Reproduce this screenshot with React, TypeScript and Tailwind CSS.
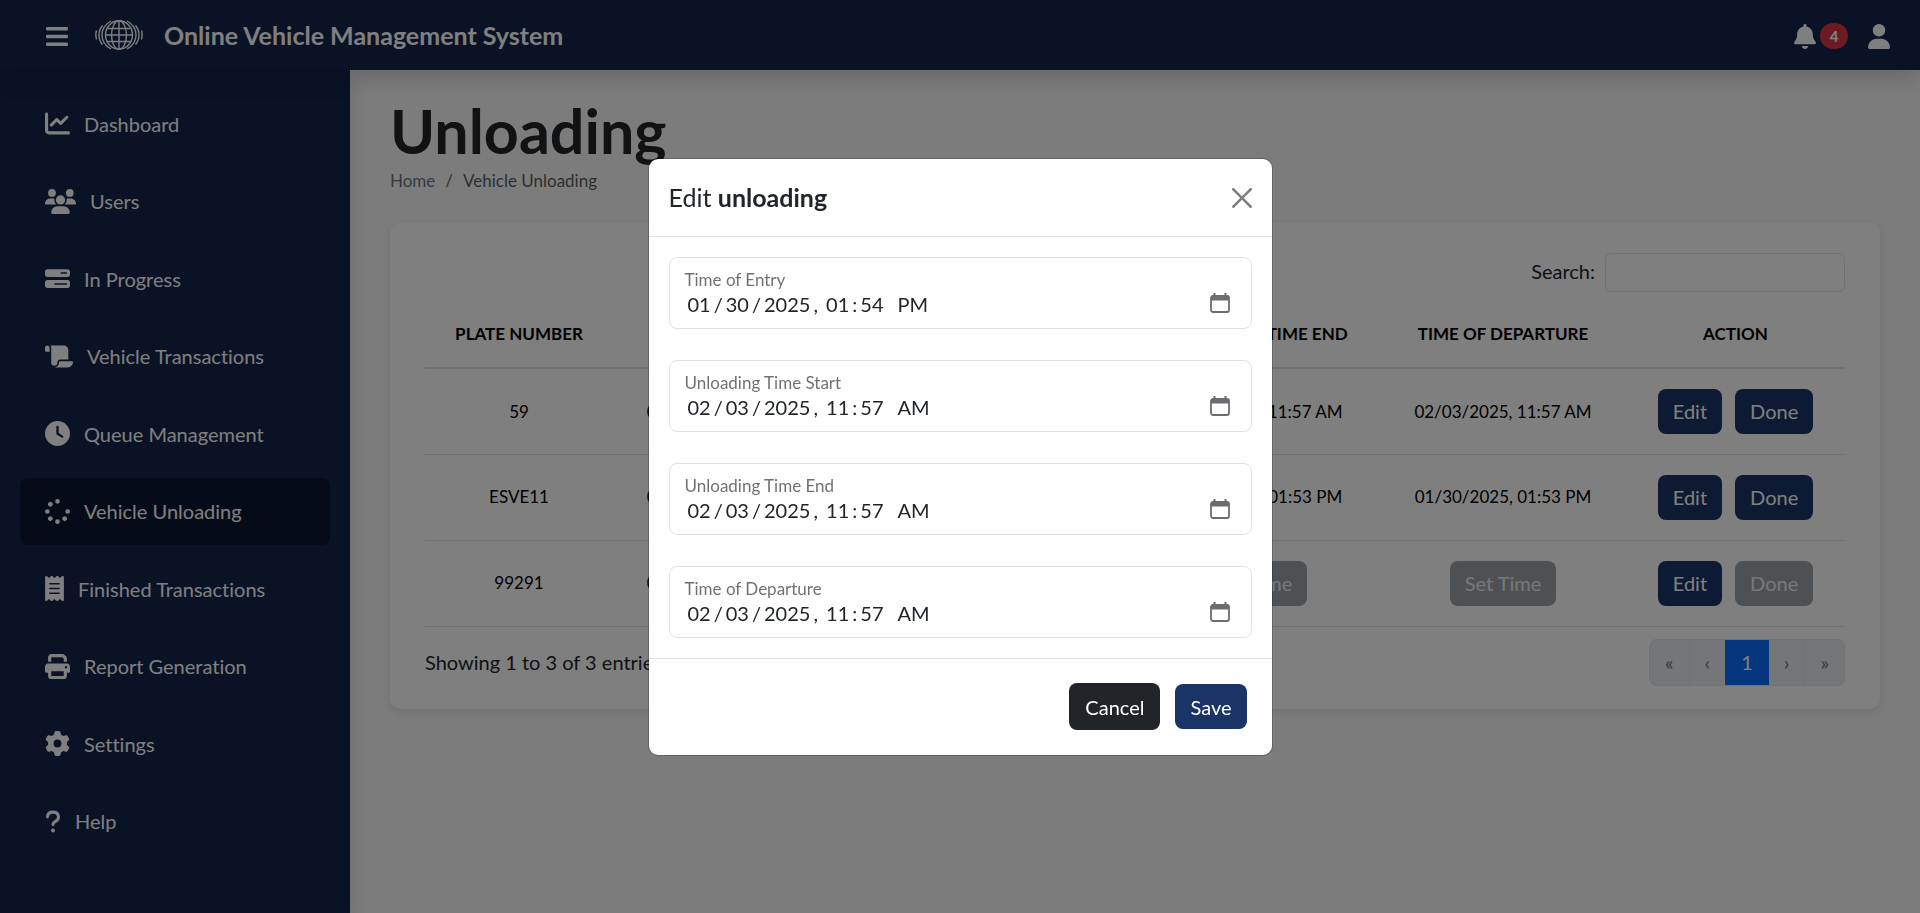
import type { ReactNode } from "react";
import { FaBars } from "react-icons/fa";
import {
  FaBarsProgress,
  FaBell,
  FaChartLine,
  FaClock,
  FaGear,
  FaPrint,
  FaQuestion,
  FaReceipt,
  FaScroll,
  FaSpinner,
  FaUser,
  FaUsers,
} from "react-icons/fa6";

const navItems = [
  { label: "Dashboard", icon: FaChartLine, width: "w-[25px]" },
  { label: "Users", icon: FaUsers, width: "w-[31px]" },
  { label: "In Progress", icon: FaBarsProgress, width: "w-[25px]" },
  { label: "Vehicle Transactions", icon: FaScroll, width: "w-[28px]" },
  { label: "Queue Management", icon: FaClock, width: "w-[25px]" },
  { label: "Vehicle Unloading", icon: FaSpinner, width: "w-[25px]", active: true },
  { label: "Finished Transactions", icon: FaReceipt, width: "w-[19px]" },
  { label: "Report Generation", icon: FaPrint, width: "w-[25px]" },
  { label: "Settings", icon: FaGear, width: "w-[25px]" },
  { label: "Help", icon: FaQuestion, width: "w-[16px]" },
];

type Row = { plate: string; entry: string; start?: string; end?: string; departure?: string };

const rows: Row[] = [
  {
    plate: "59",
    entry: "01/30/2025, 01:54 PM",
    start: "02/03/2025, 11:57 AM",
    end: "02/03/2025, 11:57 AM",
    departure: "02/03/2025, 11:57 AM",
  },
  {
    plate: "ESVE11",
    entry: "01/30/2025, 01:52 PM",
    start: "01/30/2025, 01:53 PM",
    end: "01/30/2025, 01:53 PM",
    departure: "01/30/2025, 01:53 PM",
  },
  { plate: "99291", entry: "01/30/2025, 01:55 PM" },
];

const fields = [
  { id: "entry", label: "Time of Entry", value: "2025-01-30T13:54" },
  { id: "start", label: "Unloading Time Start", value: "2025-02-03T11:57" },
  { id: "end", label: "Unloading Time End", value: "2025-02-03T11:57" },
  { id: "departure", label: "Time of Departure", value: "2025-02-03T11:57" },
];

function Globe() {
  return (
    <svg viewBox="0 0 48 32" className="h-8 w-12" fill="none" stroke="currentColor" strokeWidth="1.4" aria-hidden="true">
      <ellipse cx="24" cy="15" rx="13.5" ry="14.2" />
      <ellipse cx="24" cy="15" rx="7.5" ry="14.2" />
      <path d="M24 1v28M10.500 15h27M12.500 8.500h23M12.500 21.500h23" />
      <path d="M16 1Q7 6 7 15T16 29M32 1Q41 6 41 15T32 29" />
      <path d="M7.500 5.500Q4 9.500 4 15T7.500 24.500M40.500 5.500Q44 9.500 44 15T40.500 24.500" />
      <path d="M1.500 10.500Q.2 15 1.500 19.500M46.500 10.500Q47.800 15 46.500 19.500" />
    </svg>
  );
}

function CalendarIcon() {
  return (
    <svg viewBox="0 0 20 20" className="mt-[2px] mr-[6px] size-5 shrink-0 text-[#6b6d70]" fill="none" aria-hidden="true">
      <rect x="1" y="3" width="18" height="16" rx="2" stroke="currentColor" strokeWidth="1.8" />
      <path d="M1 4.500Q1 2.500 3 2.500h14q2 0 2 2v3H1zM3.500 0h2v3h-2zM14.500 0h2v3h-2z" fill="currentColor" />
    </svg>
  );
}

function ActionButton({ children, disabled = false }: { children: ReactNode; disabled?: boolean }) {
  return (
    <button
      type="button"
      disabled={disabled}
      className="h-[45px] rounded-lg bg-[#1b3467] px-[15px] text-xl text-white disabled:bg-[#9ba3a7] disabled:text-[#f0f0f0]"
    >
      {children}
    </button>
  );
}

function TimeCell({ value }: { value?: string }) {
  return <td>{value ?? <ActionButton disabled>Set Time</ActionButton>}</td>;
}

function Header() {
  return (
    <header className="relative z-20 flex h-[70px] items-center bg-[#14254b] pt-[2px] pr-[30px] pl-[46px] text-white shadow-[0_10px_20px_rgba(0,0,0,0.15)]">
      <button type="button" aria-label="Toggle menu">
        <FaBars className="h-[25px] w-[22px]" />
      </button>
      <a href="#" className="ml-[27px] flex items-center gap-[21px]">
        <Globe />
        <span className="text-[25px] font-bold">Online Vehicle Management System</span>
      </a>
      <div className="ml-auto flex items-center gap-5">
        <button type="button" aria-label="Notifications" className="flex items-center gap-1">
          <FaBell className="h-[25px] w-[22px]" />
          <span className="flex h-[26px] w-7 items-center justify-center rounded-full bg-[#dc3545] text-[15px] font-bold">
            4
          </span>
        </button>
        <button type="button" aria-label="Account">
          <FaUser className="h-[25px] w-[22px]" />
        </button>
      </div>
    </header>
  );
}

function Sidebar() {
  return (
    <nav className="relative z-10 flex w-[350px] shrink-0 flex-col justify-between bg-[#14254b] px-5 pt-5 pb-[58px] text-white shadow-[0_10px_20px_rgba(0,0,0,0.15)]">
      {navItems.map(({ label, icon: Icon, width, active }) => (
        <a
          key={label}
          href="#"
          className={`flex h-[67px] items-center gap-[14px] rounded-lg px-[25px] text-xl ${active ? "bg-[#0a1830]" : ""}`}
        >
          <Icon className={`h-[25px] ${width}`} />
          {label}
        </a>
      ))}
    </nav>
  );
}

function UnloadingTable() {
  return (
    <table className="mt-[6px] w-full table-fixed text-center text-[17px] text-black">
      <colgroup>
        <col className="w-[188px]" />
        <col className="w-[244px]" />
        <col className="w-[271px]" />
        <col className="w-[252px]" />
        <col className="w-[246px]" />
        <col className="w-[219px]" />
      </colgroup>
      <thead>
        <tr className="h-[70px] border-b-2 border-[#dee2e6] uppercase *:pt-[2px]">
          <th>Plate Number</th>
          <th>Time of Entry</th>
          <th>Unloading Time Start</th>
          <th>Unloading Time End</th>
          <th>Time of Departure</th>
          <th>Action</th>
        </tr>
      </thead>
      <tbody>
        {rows.map((row) => (
          <tr key={row.plate} className="h-[86px] border-b border-[#dee2e6]">
            <td>{row.plate}</td>
            <TimeCell value={row.entry} />
            <TimeCell value={row.start} />
            <TimeCell value={row.end} />
            <TimeCell value={row.departure} />
            <td>
              <div className="flex justify-center gap-[13px]">
                <ActionButton>Edit</ActionButton>
                <ActionButton disabled={!row.departure}>Done</ActionButton>
              </div>
            </td>
          </tr>
        ))}
      </tbody>
    </table>
  );
}

function Pagination() {
  return (
    <div className="flex h-[47px] overflow-hidden rounded-lg border border-[#dee2e6] bg-[#e9ecef] text-xl text-[#6c757d]">
      <button type="button" aria-label="First page" className="border-r border-[#dee2e6] px-[15px]">
        «
      </button>
      <button type="button" aria-label="Previous page" className="px-[15px]">
        ‹
      </button>
      <button type="button" aria-current="page" className="-my-px bg-[#0d6efd] px-4 text-white">
        1
      </button>
      <button type="button" aria-label="Next page" className="border-r border-[#dee2e6] px-[15px]">
        ›
      </button>
      <button type="button" aria-label="Last page" className="px-[15px]">
        »
      </button>
    </div>
  );
}

function DateTimeField({ id, label, value }: { id: string; label: string; value: string }) {
  return (
    <div className="flex h-[72px] flex-col rounded-lg border border-[#dee2e6] px-[15px] pt-[10px]">
      <label htmlFor={id} className="text-[17px] leading-[23px] text-[#212529]/65">
        {label}
      </label>
      <div className="flex">
        <input
          id={id}
          type="datetime-local"
          defaultValue={value}
          className="h-[26px] w-full text-xl outline-none [&::-webkit-calendar-picker-indicator]:hidden [&::-webkit-datetime-edit-ampm-field]:pl-[6px] [&::-webkit-datetime-edit-day-field]:px-[3px] [&::-webkit-datetime-edit-hour-field]:px-[3px] [&::-webkit-datetime-edit-minute-field]:px-[3px] [&::-webkit-datetime-edit-month-field]:px-[3px] [&::-webkit-datetime-edit-year-field]:px-[3px]"
        />
        <CalendarIcon />
      </div>
    </div>
  );
}

function EditDialog() {
  return (
    <div className="fixed inset-0 z-30 flex items-center justify-center bg-black/50">
      <form
        role="dialog"
        aria-labelledby="dialog-title"
        className="w-full max-w-[625px] rounded-[10px] border border-black/20 bg-white bg-clip-padding text-[#212529]"
      >
        <div className="flex h-[78px] items-center justify-between border-b border-[#dee2e6] px-5 pt-[2px]">
          <h2 id="dialog-title" className="text-[25px]">
            Edit <strong className="font-bold">unloading</strong>
          </h2>
          <button type="button" aria-label="Close" className="text-black/50">
            <svg viewBox="0 0 16 16" className="size-5" fill="currentColor">
              <path d="M.293.293a1 1 0 0 1 1.414 0L8 6.586 14.293.293a1 1 0 1 1 1.414 1.414L9.414 8l6.293 6.293a1 1 0 0 1-1.414 1.414L8 9.414l-6.293 6.293a1 1 0 0 1-1.414-1.414L6.586 8 .293 1.707a1 1 0 0 1 0-1.414z" />
            </svg>
          </button>
        </div>
        <div className="flex flex-col gap-[31px] px-5 pt-5 pb-5">
          {fields.map((field) => (
            <DateTimeField key={field.id} {...field} />
          ))}
        </div>
        <div className="flex h-[97px] items-center justify-end gap-[15px] border-t border-[#dee2e6] pr-[25px] pl-6">
          <button type="button" className="h-[47px] rounded-lg bg-[#212529] px-4 text-xl text-white">
            Cancel
          </button>
          <ActionButton>Save</ActionButton>
        </div>
      </form>
    </div>
  );
}

export default function App() {
  return (
    <div className="flex min-h-screen flex-col bg-[#f8f9fa] font-['Lato',sans-serif] text-[#212529] [font-variant-ligatures:none]">
      <Header />
      <div className="flex grow">
        <Sidebar />
        <main className="min-w-0 grow px-10 pt-[25px]">
          <h1 className="text-[61px] leading-[72px] font-bold">Unloading</h1>
          <nav aria-label="Breadcrumb" className="flex gap-[10px] text-[17px] leading-[27px] text-[#212529]/75">
            <a href="#" className="text-[#6c757d]">
              Home
            </a>
            <span>/</span>
            <span>Vehicle Unloading</span>
          </nav>
          <section className="mt-[29px] rounded-[10px] bg-white px-[35px] pt-[30px] pb-[23px] shadow-[0_3px_8px_rgba(0,0,0,0.1)]">
            <div className="flex items-center justify-end gap-[10px]">
              <label htmlFor="search" className="pb-1 text-xl">
                Search:
              </label>
              <input id="search" type="search" className="h-[39px] w-60 rounded-md border border-[#dee2e6] px-2 text-lg" />
            </div>
            <UnloadingTable />
            <div className="mt-3 flex items-center justify-between text-xl">
              <p>Showing 1 to 3 of 3 entries</p>
              <Pagination />
            </div>
          </section>
        </main>
      </div>
      <EditDialog />
    </div>
  );
}
